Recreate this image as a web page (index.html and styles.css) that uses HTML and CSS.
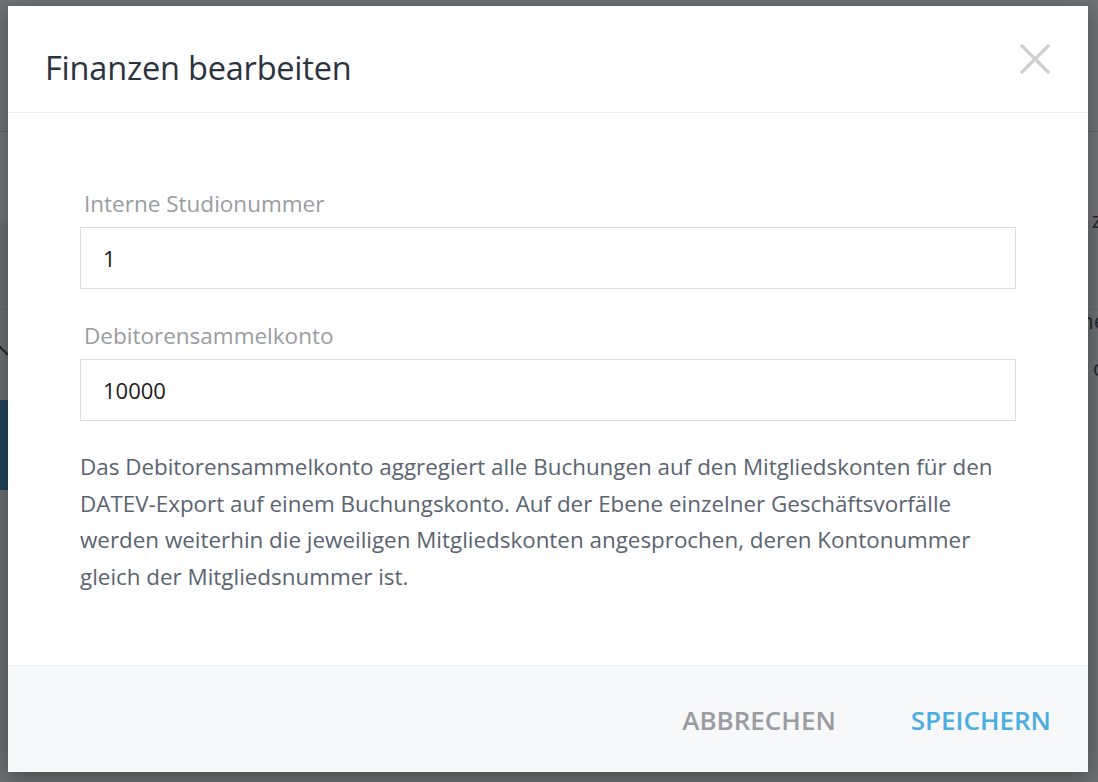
FILE: index.html
```html
<!DOCTYPE html>
<html lang="de">
<head>
<meta charset="utf-8">
<title>Finanzen bearbeiten</title>
<link rel="stylesheet" href="styles.css">
</head>
<body>
<div class="page">
  <div class="page-top"></div>
  <div class="page-bar"></div>
  <div class="page-row"><span class="page-z">z</span></div>
  <div class="page-row1">
    <span class="page-chev"></span>
    <span class="page-txt">ne</span>
  </div>
  <div class="page-row2">
    <div class="page-blue"></div>
    <span class="page-txt2">o</span>
  </div>
</div>
<div class="overlay"></div>
<div class="modal">
  <div class="modal-header">
    <h1 class="modal-title">Finanzen bearbeiten</h1>
    <button class="close" aria-label="Schließen">
      <svg width="30" height="30" viewBox="0 0 30 30"><path d="M2 2 L28 28 M28 2 L2 28" stroke="#d0d0d0" stroke-width="3.2" stroke-linecap="square" fill="none"/></svg>
    </button>
  </div>
  <div class="modal-body">
    <label class="field-label">Interne Studionummer</label>
    <div class="input">1</div>
    <label class="field-label second">Debitorensammelkonto</label>
    <div class="input">10000</div>
    <p class="hint">Das Debitorensammelkonto aggregiert alle Buchungen auf den Mitgliedskonten für den<br>DATEV-Export auf einem Buchungskonto. Auf der Ebene einzelner Geschäftsvorfälle<br>werden weiterhin die jeweiligen Mitgliedskonten angesprochen, deren Kontonummer<br>gleich der Mitgliedsnummer ist.</p>
  </div>
  <div class="modal-footer">
    <button class="btn cancel">ABBRECHEN</button>
    <button class="btn save">SPEICHERN</button>
  </div>
</div>
</body>
</html>
```
FILE: styles.css
```css
html, body {
  margin: 0;
  padding: 0;
  height: 100%;
}
body {
  background: #f2f3f5;
  font-family: "Open Sans", "Noto Sans", sans-serif;
  overflow: hidden;
  position: relative;
}
.page {
  display: flex;
  flex-direction: column;
  font-size: 22px;
  color: #2c3340;
}
.page-top {
  height: 131px;
  border-bottom: 1px solid #d6d7da;
  background: #fafafa;
}
.page-bar {
  height: 88px;
  background: #ffffff;
}
.page-row {
  height: 89px;
  border-bottom: 1px solid #dcdde0;
  display: flex;
  justify-content: flex-end;
  align-items: flex-start;
}
.page-z { margin-right: -4px; margin-top: -16px; }
.page-row1 {
  height: 90px;
  display: flex;
  justify-content: space-between;
  align-items: flex-start;
}
.page-chev {
  width: 10px; height: 10px;
  border-left: 2px solid #2c3340;
  border-top: 2px solid #2c3340;
  transform: rotate(45deg);
  margin-left: -6px;
  margin-top: 38px;
}
.page-txt { margin-right: -8px; margin-top: -5px; }
.page-row2 {
  height: 400px;
  display: flex;
  justify-content: space-between;
  align-items: flex-start;
}
.page-blue {
  width: 20px;
  height: 90px;
  background: #2f7fb2;
}
.page-txt2 { margin-right: -8px; margin-top: -48px; }
.overlay {
  position: absolute;
  inset: 0;
  background: rgba(28, 30, 36, 0.62);
}
.modal {
  position: absolute;
  left: 8px;
  top: 6px;
  width: 1080px;
  height: 766px;
  background: #ffffff;
  display: flex;
  flex-direction: column;
  box-shadow: 0 5px 20px rgba(0,0,0,0.35);
}
.modal-header {
  height: 107px;
  border-bottom: 1px solid #eeeff1;
  display: flex;
  align-items: center;
  justify-content: space-between;
  padding: 0 38px 0 37px;
  box-sizing: border-box;
}
.modal-title {
  margin: 0;
  font-weight: 400;
  font-size: 32.5px;
  color: #2c3340;
  letter-spacing: -0.2px;
  position: relative;
  top: 8px;
}
.close {
  border: 0;
  background: none;
  padding: 0;
  width: 30px;
  height: 30px;
  cursor: pointer;
}
.close svg { display: block; }
.modal-body {
  flex: 1;
  padding: 77px 72px 0 72px;
  box-sizing: border-box;
}
.field-label {
  display: block;
  font-size: 22.5px;
  color: #9a9ca1;
  padding-left: 4px;
  line-height: 28px;
  margin-bottom: 9px;
}
.field-label.second { margin-top: 33px; }
.input {
  height: 62px;
  box-sizing: border-box;
  border: 1px solid #dcdde0;
  padding: 0 22px;
  display: flex;
  align-items: center;
  font-size: 22px;
  color: #1a1a1a;
}
.hint {
  margin: 28px 0 0 0;
  font-size: 22.4px;
  line-height: 36.5px;
  color: #5a6470;
  white-space: nowrap;
}
.modal-footer {
  height: 107px;
  background: #f7f8fa;
  border-top: 1px solid #eeeff1;
  display: flex;
  justify-content: flex-end;
  align-items: center;
  padding-right: 37px;
  gap: 75px;
  box-sizing: border-box;
}
.btn {
  border: 0;
  background: none;
  padding: 0;
  font-family: inherit;
  font-weight: 600;
  font-size: 26px;
  cursor: pointer;
  position: relative;
  top: 1px;
}
.cancel { color: #9a9ca2; }
.save { color: #4aaee0; }
```
